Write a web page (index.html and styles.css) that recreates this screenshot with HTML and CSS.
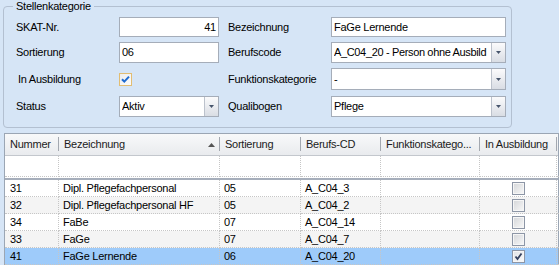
FILE: index.html
```html
<!DOCTYPE html>
<html lang="de">
<head>
<meta charset="utf-8">
<title>Stellenkategorie</title>
<link rel="stylesheet" href="styles.css">
</head>
<body>
<div class="page">
  <fieldset class="group">
    <legend>Stellenkategorie</legend>
    <div class="form">
      <div class="frow r1">
        <span class="lbl">SKAT-Nr.</span>
        <div class="input num">41</div>
        <span class="lbl rl">Bezeichnung</span>
        <div class="input">FaGe Lernende</div>
      </div>
      <div class="frow r2">
        <span class="lbl">Sortierung</span>
        <div class="input">06</div>
        <span class="lbl rl">Berufscode</span>
        <div class="input combo"><span class="val tight">A_C04_20 - Person ohne Ausbild</span><span class="btn"><svg width="5" height="3" viewBox="0 0 5 3"><path d="M0 0H5L2.5 3Z" fill="#46546b"/></svg></span></div>
      </div>
      <div class="frow r3">
        <span class="lbl ind">In Ausbildung</span>
        <div class="cellc"><span class="fcb"><svg width="11" height="11" viewBox="0 0 11 11"><path d="M2 5.2L4.3 7.6L9 2.6" fill="none" stroke="#1f6bd0" stroke-width="2"/></svg></span></div>
        <span class="lbl rl">Funktionskategorie</span>
        <div class="input combo"><span class="val">-</span><span class="btn"><svg width="5" height="3" viewBox="0 0 5 3"><path d="M0 0H5L2.5 3Z" fill="#46546b"/></svg></span></div>
      </div>
      <div class="frow r4">
        <span class="lbl">Status</span>
        <div class="input combo"><span class="val">Aktiv</span><span class="btn"><svg width="5" height="3" viewBox="0 0 5 3"><path d="M0 0H5L2.5 3Z" fill="#46546b"/></svg></span></div>
        <span class="lbl rl">Qualibogen</span>
        <div class="input combo"><span class="val">Pflege</span><span class="btn"><svg width="5" height="3" viewBox="0 0 5 3"><path d="M0 0H5L2.5 3Z" fill="#46546b"/></svg></span></div>
      </div>
    </div>
  </fieldset>

  <div class="grid">
    <div class="row head">
      <div class="th">Nummer</div>
      <div class="th sorted"><span>Bezeichnung</span><svg width="7" height="4" viewBox="0 0 7 4"><path d="M0 4H7L3.5 0Z" fill="#555"/></svg></div>
      <div class="th">Sortierung</div>
      <div class="th">Berufs-CD</div>
      <div class="th">Funktionskatego...</div>
      <div class="th">In Ausbildung</div>
      <div class="th last"></div>
    </div>
    <div class="row filter">
      <div class="td"></div><div class="td"></div><div class="td"></div><div class="td"></div><div class="td"></div><div class="td"></div><div class="td last"></div>
    </div>
    <div class="split"></div>
    <div class="row data">
      <div class="td">31</div><div class="td">Dipl. Pflegefachpersonal</div><div class="td">05</div><div class="td">A_C04_3</div><div class="td"></div><div class="td ctr"><span class="gcb"></span></div><div class="td last"></div>
    </div>
    <div class="row data alt">
      <div class="td">32</div><div class="td">Dipl. Pflegefachpersonal HF</div><div class="td">05</div><div class="td">A_C04_2</div><div class="td"></div><div class="td ctr"><span class="gcb"></span></div><div class="td last"></div>
    </div>
    <div class="row data">
      <div class="td">34</div><div class="td">FaBe</div><div class="td">07</div><div class="td">A_C04_14</div><div class="td"></div><div class="td ctr"><span class="gcb"></span></div><div class="td last"></div>
    </div>
    <div class="row data alt">
      <div class="td">33</div><div class="td">FaGe</div><div class="td">07</div><div class="td">A_C04_7</div><div class="td"></div><div class="td ctr"><span class="gcb"></span></div><div class="td last"></div>
    </div>
    <div class="row data sel">
      <div class="td">41</div><div class="td">FaGe Lernende</div><div class="td">06</div><div class="td">A_C04_20</div><div class="td"></div><div class="td ctr"><span class="gcb on"><svg width="11" height="11" viewBox="0 0 11 11"><path d="M2.5 5.5L4.5 8L8.5 2.5" fill="none" stroke="#34405e" stroke-width="1.8"/></svg></span></div><div class="td last"></div>
    </div>
  </div>
</div>
</body>
</html>
```

FILE: styles.css
```css
* { box-sizing: border-box; }
html, body { margin: 0; padding: 0; }
body {
  width: 559px;
  height: 265px;
  overflow: hidden;
  background: #d6e5f6;
  font-family: "Liberation Sans", Arial, sans-serif;
  font-size: 11px;
  line-height: 13px;
  letter-spacing: -0.25px;
  color: #000;
}
.page { padding: 0 0 0 3px; }

/* group box */
.group {
  margin: 0;
  width: 509px;
  border: 1px solid #b3c0d1;
  border-radius: 4px;
  padding: 4px 0 10px 12px;
  min-inline-size: 0;
}
.group legend {
  margin-left: -3px;
  padding: 0 3px;
  line-height: 13px;
  color: #000;
}
.form { display: flex; flex-direction: column; gap: 5px; }
.frow {
  display: grid;
  grid-template-columns: 103px 100px 112px 175px;
  align-items: center;
}
.r1 { height: 20px; }
.r2 { height: 21px; }
.r3 { height: 22px; }
.r4 { height: 21px; margin-top: 1px; }
.lbl { white-space: nowrap; }
.lbl.rl { padding-left: 9px; }
.lbl.ind { padding-left: 2px; }

.input {
  height: 100%;
  background: #fff;
  border: 1px solid #a5adb9;
  display: flex;
  align-items: center;
  padding: 0 2px 0 2px;
  white-space: nowrap;
  overflow: hidden;
}
.input.num { justify-content: flex-end; }
.input.combo { padding-right: 0; }
.combo .val { flex: 1; overflow: hidden; white-space: nowrap; }
.combo .val.tight { letter-spacing: -0.35px; }
.combo .btn {
  width: 14px;
  height: 100%;
  flex: none;
  border-left: 1px solid #bcc2cc;
  background: linear-gradient(#fbfbfc, #d9dde4);
  display: flex;
  align-items: center;
  justify-content: center;
}
.cellc { display: flex; align-items: center; height: 100%; }
.fcb {
  width: 13px;
  height: 13px;
  border: 1px solid #e2bd72;
  background: linear-gradient(135deg, #eeeeee, #fbfbfb);
  display: flex;
  align-items: center;
  justify-content: center;
}

/* grid */
.grid {
  margin: 5px 0 0 1px;
  width: 555px;
  height: 140px;
  border: 1px solid #9ba6b4;
  border-bottom: 0;
  background: #fff;
}
.row {
  display: grid;
  grid-template-columns: 54px 161px 81px 80px 99px 77px 1fr;
}
.head {
  height: 22px;
  border-bottom: 1px solid #c3c7cd;
  background: linear-gradient(#f8f9fa, #e9ebee);
}
.th {
  padding-left: 5px;
  display: flex;
  align-items: center;
  white-space: nowrap;
  overflow: hidden;
  color: #1b1b1b;
  background: linear-gradient(#a3a8b0, #a3a8b0) right 3px / 1px 14px no-repeat;
}
.th.last { background: none; }
.th.sorted { justify-content: space-between; padding-right: 5px; }
.td {
  padding-left: 4px;
  border-right: 1px dotted #c6c6c6;
  border-bottom: 1px dotted #c6c6c6;
  white-space: nowrap;
  overflow: hidden;
  display: flex;
  align-items: center;
}
.td:first-child { padding-left: 5px; }
.td.last { border-right: 0; }
.filter { height: 21px; }
.split { height: 3px; border-bottom: 2px solid #a6aebb; }
.data { height: 17px; }
.alt { background: #f4f4f4; }
.sel { background: #9ecbfa; }
.td.ctr { justify-content: center; padding-left: 0; }
.gcb {
  width: 13px;
  height: 13px;
  border: 1px solid #8d96a6;
  box-shadow: inset 0 0 0 1px #f6f6f6;
  background: linear-gradient(135deg, #d4d6d9, #f8f8f8);
  display: flex;
  align-items: center;
  justify-content: center;
}
.gcb.on { background: linear-gradient(135deg, #dfe2e6, #fbfbfb); }
```
